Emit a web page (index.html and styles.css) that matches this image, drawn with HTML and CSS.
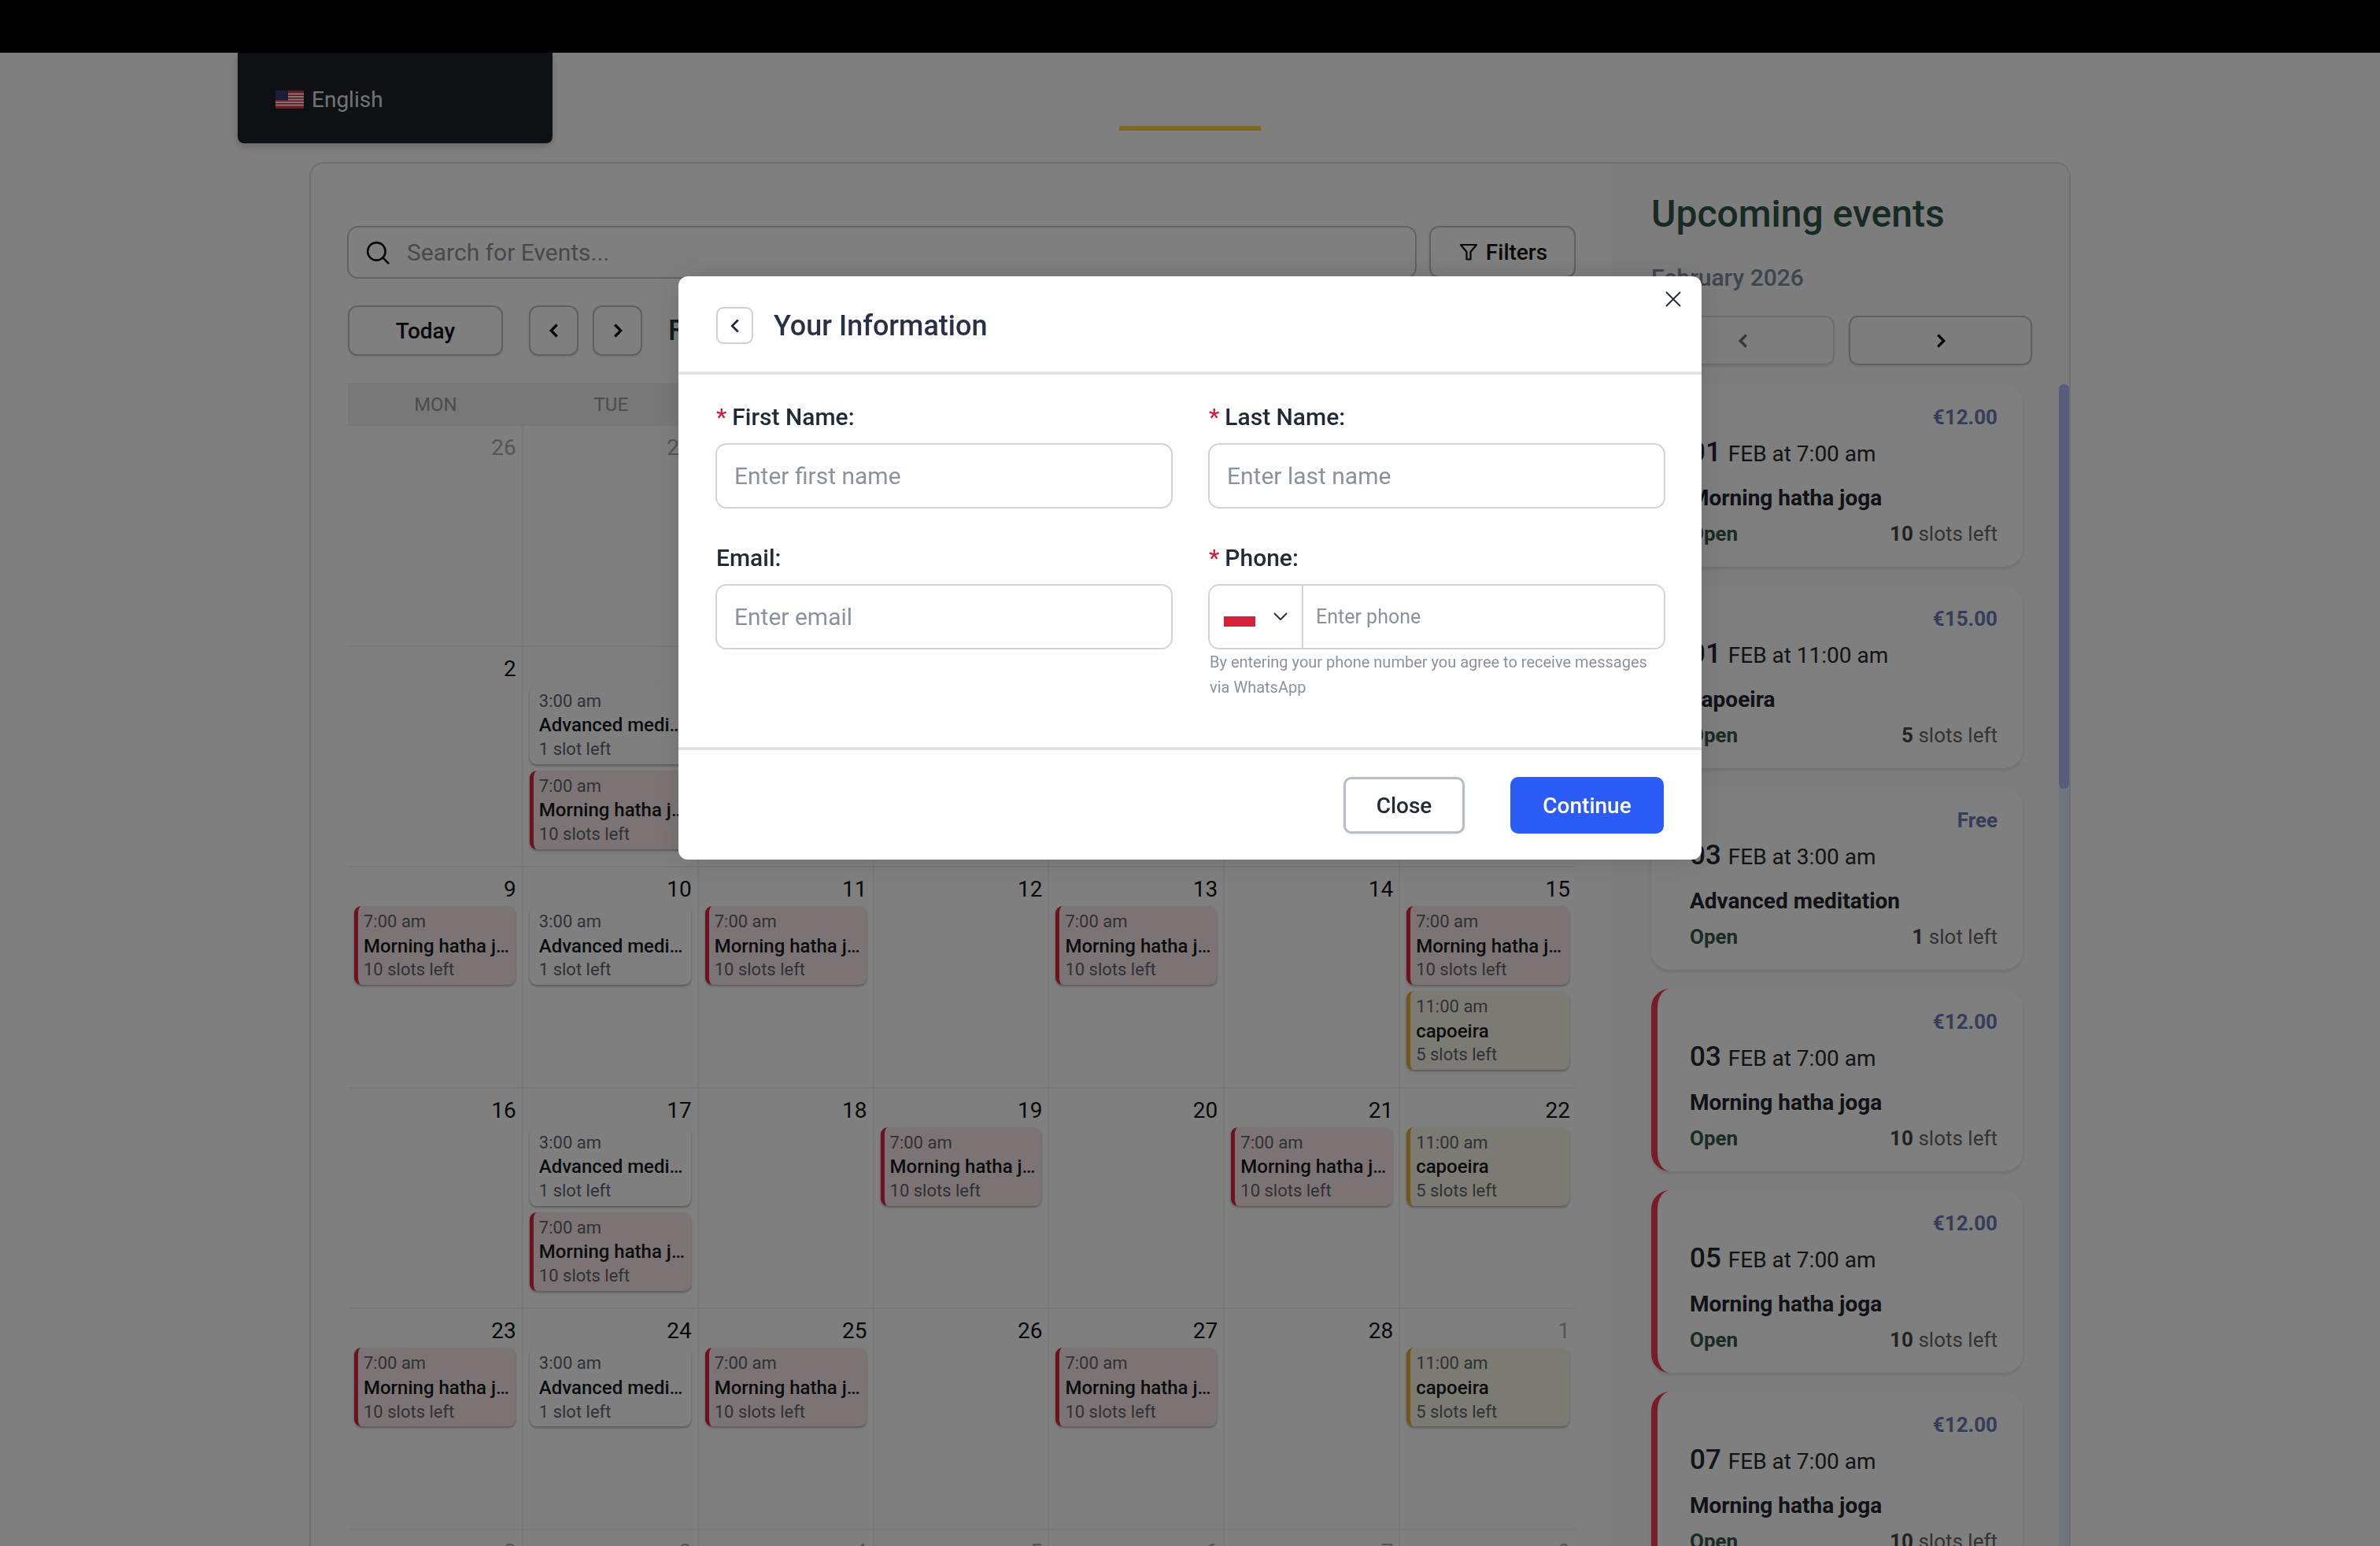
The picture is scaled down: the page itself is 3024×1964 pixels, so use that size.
FILE: index.html
```html
<!DOCTYPE html>
<html lang="en">
<head>
  <meta charset="UTF-8" />
  <title>Events Calendar</title>
  <link rel="stylesheet" href="styles.css">
</head>
<body>
  <header class="topbar"></header>

  <div class="lang-menu">
    <svg class="us-flag" viewBox="0 0 36 23">
      <rect width="36" height="23" fill="#d8303f"/>
      <rect y="3.5" width="36" height="1.8" fill="#fff"/>
      <rect y="7" width="36" height="1.8" fill="#fff"/>
      <rect y="10.6" width="36" height="1.8" fill="#fff"/>
      <rect y="14.1" width="36" height="1.8" fill="#fff"/>
      <rect y="17.7" width="36" height="1.8" fill="#fff"/>
      <rect width="16" height="12.4" fill="#3c3b6e"/>
    </svg>
    <span>English</span>
  </div>

  <main class="page">
    <div class="accent-line"></div>

    <section class="board">
      <div class="calendar">
        <div class="search-row">
          <div class="search-box">
            <svg class="search-icon" viewBox="0 0 28 28" fill="none" stroke="#111" stroke-width="2.4" stroke-linecap="round">
              <circle cx="12.5" cy="12.5" r="10.5"/>
              <path d="M20.5 20.5l6 6"/>
            </svg>
            <input type="text" placeholder="Search for Events...">
          </div>
          <button class="btn filters-btn">
            <svg class="filter-icon" viewBox="0 0 24 24" fill="none" stroke="#111" stroke-width="2.2" stroke-linejoin="round">
              <path d="M2 3h20l-7.5 9v9.500h-5V12z"/>
            </svg>
            Filters
          </button>
        </div>

        <div class="toolbar">
          <button class="btn today-btn">Today</button>
          <button class="btn nav-btn">
            <svg viewBox="0 0 16 16" class="chev" fill="none" stroke="#111" stroke-width="2.2"><path d="M10.500 3l-5 5 5 5"/></svg>
          </button>
          <button class="btn nav-btn">
            <svg viewBox="0 0 16 16" class="chev" fill="none" stroke="#111" stroke-width="2.2"><path d="M5.500 3l5 5-5 5"/></svg>
          </button>
          <h2 class="month-title">February 2026</h2>
        </div>

        <div class="week-head">
          <div>MON</div><div>TUE</div><div>WED</div><div>THU</div><div>FRI</div><div>SAT</div><div>SUN</div>
        </div>

        <div class="month-grid">
          <div class="cell"><div class="day muted">26</div></div>
          <div class="cell"><div class="day muted">27</div></div>
          <div class="cell"><div class="day muted">28</div></div>
          <div class="cell"><div class="day muted">29</div></div>
          <div class="cell"><div class="day muted">30</div></div>
          <div class="cell"><div class="day muted">31</div></div>
          <div class="cell"><div class="day">1</div>
            <div class="event red"><p class="ev-time">7:00 am</p><p class="ev-name">Morning hatha joga</p><p class="ev-slots">10 slots left</p></div>
            <div class="event yellow"><p class="ev-time">11:00 am</p><p class="ev-name">capoeira</p><p class="ev-slots">5 slots left</p></div>
          </div>

          <div class="cell"><div class="day">2</div></div>
          <div class="cell"><div class="day">3</div>
            <div class="event"><p class="ev-time">3:00 am</p><p class="ev-name">Advanced meditation</p><p class="ev-slots">1 slot left</p></div>
            <div class="event red"><p class="ev-time">7:00 am</p><p class="ev-name">Morning hatha joga</p><p class="ev-slots">10 slots left</p></div>
          </div>
          <div class="cell"><div class="day">4</div></div>
          <div class="cell"><div class="day">5</div>
            <div class="event red"><p class="ev-time">7:00 am</p><p class="ev-name">Morning hatha joga</p><p class="ev-slots">10 slots left</p></div>
          </div>
          <div class="cell"><div class="day">6</div></div>
          <div class="cell"><div class="day">7</div>
            <div class="event red"><p class="ev-time">7:00 am</p><p class="ev-name">Morning hatha joga</p><p class="ev-slots">10 slots left</p></div>
          </div>
          <div class="cell"><div class="day">8</div></div>

          <div class="cell"><div class="day">9</div>
            <div class="event red"><p class="ev-time">7:00 am</p><p class="ev-name">Morning hatha joga</p><p class="ev-slots">10 slots left</p></div>
          </div>
          <div class="cell"><div class="day">10</div>
            <div class="event"><p class="ev-time">3:00 am</p><p class="ev-name">Advanced meditation</p><p class="ev-slots">1 slot left</p></div>
          </div>
          <div class="cell"><div class="day">11</div>
            <div class="event red"><p class="ev-time">7:00 am</p><p class="ev-name">Morning hatha joga</p><p class="ev-slots">10 slots left</p></div>
          </div>
          <div class="cell"><div class="day">12</div></div>
          <div class="cell"><div class="day">13</div>
            <div class="event red"><p class="ev-time">7:00 am</p><p class="ev-name">Morning hatha joga</p><p class="ev-slots">10 slots left</p></div>
          </div>
          <div class="cell"><div class="day">14</div></div>
          <div class="cell"><div class="day">15</div>
            <div class="event red"><p class="ev-time">7:00 am</p><p class="ev-name">Morning hatha joga</p><p class="ev-slots">10 slots left</p></div>
            <div class="event yellow"><p class="ev-time">11:00 am</p><p class="ev-name">capoeira</p><p class="ev-slots">5 slots left</p></div>
          </div>

          <div class="cell"><div class="day">16</div></div>
          <div class="cell"><div class="day">17</div>
            <div class="event"><p class="ev-time">3:00 am</p><p class="ev-name">Advanced meditation</p><p class="ev-slots">1 slot left</p></div>
            <div class="event red"><p class="ev-time">7:00 am</p><p class="ev-name">Morning hatha joga</p><p class="ev-slots">10 slots left</p></div>
          </div>
          <div class="cell"><div class="day">18</div></div>
          <div class="cell"><div class="day">19</div>
            <div class="event red"><p class="ev-time">7:00 am</p><p class="ev-name">Morning hatha joga</p><p class="ev-slots">10 slots left</p></div>
          </div>
          <div class="cell"><div class="day">20</div></div>
          <div class="cell"><div class="day">21</div>
            <div class="event red"><p class="ev-time">7:00 am</p><p class="ev-name">Morning hatha joga</p><p class="ev-slots">10 slots left</p></div>
          </div>
          <div class="cell"><div class="day">22</div>
            <div class="event yellow"><p class="ev-time">11:00 am</p><p class="ev-name">capoeira</p><p class="ev-slots">5 slots left</p></div>
          </div>

          <div class="cell"><div class="day">23</div>
            <div class="event red"><p class="ev-time">7:00 am</p><p class="ev-name">Morning hatha joga</p><p class="ev-slots">10 slots left</p></div>
          </div>
          <div class="cell"><div class="day">24</div>
            <div class="event"><p class="ev-time">3:00 am</p><p class="ev-name">Advanced meditation</p><p class="ev-slots">1 slot left</p></div>
          </div>
          <div class="cell"><div class="day">25</div>
            <div class="event red"><p class="ev-time">7:00 am</p><p class="ev-name">Morning hatha joga</p><p class="ev-slots">10 slots left</p></div>
          </div>
          <div class="cell"><div class="day">26</div></div>
          <div class="cell"><div class="day">27</div>
            <div class="event red"><p class="ev-time">7:00 am</p><p class="ev-name">Morning hatha joga</p><p class="ev-slots">10 slots left</p></div>
          </div>
          <div class="cell"><div class="day">28</div></div>
          <div class="cell"><div class="day muted">1</div>
            <div class="event yellow"><p class="ev-time">11:00 am</p><p class="ev-name">capoeira</p><p class="ev-slots">5 slots left</p></div>
          </div>

          <div class="cell"><div class="day muted">2</div></div>
          <div class="cell"><div class="day muted">3</div></div>
          <div class="cell"><div class="day muted">4</div></div>
          <div class="cell"><div class="day muted">5</div></div>
          <div class="cell"><div class="day muted">6</div></div>
          <div class="cell"><div class="day muted">7</div></div>
          <div class="cell"><div class="day muted">8</div></div>
        </div>
      </div>

      <aside class="upcoming">
        <h2>Upcoming events</h2>
        <div class="up-month">February 2026</div>
        <div class="up-nav">
          <button class="btn up-btn faded">
            <svg viewBox="0 0 16 16" class="chev" fill="none" stroke="#111" stroke-width="2.2"><path d="M10.500 3l-5 5 5 5"/></svg>
          </button>
          <button class="btn up-btn">
            <svg viewBox="0 0 16 16" class="chev" fill="none" stroke="#111" stroke-width="2.2"><path d="M5.500 3l5 5-5 5"/></svg>
          </button>
        </div>

        <div class="up-body">
          <div class="up-list">
            <article class="up-card">
              <div class="up-price">€12.00</div>
              <div class="up-date"><b>01</b> FEB at 7:00 am</div>
              <div class="up-name">Morning hatha joga</div>
              <div class="up-foot"><span class="up-open">Open</span><span><b>10</b> slots left</span></div>
            </article>
            <article class="up-card">
              <div class="up-price">€15.00</div>
              <div class="up-date"><b>01</b> FEB at 11:00 am</div>
              <div class="up-name">capoeira</div>
              <div class="up-foot"><span class="up-open">Open</span><span><b>5</b> slots left</span></div>
            </article>
            <article class="up-card">
              <div class="up-price">Free</div>
              <div class="up-date"><b>03</b> FEB at 3:00 am</div>
              <div class="up-name">Advanced meditation</div>
              <div class="up-foot"><span class="up-open">Open</span><span><b>1</b> slot left</span></div>
            </article>
            <article class="up-card red">
              <div class="up-price">€12.00</div>
              <div class="up-date"><b>03</b> FEB at 7:00 am</div>
              <div class="up-name">Morning hatha joga</div>
              <div class="up-foot"><span class="up-open">Open</span><span><b>10</b> slots left</span></div>
            </article>
            <article class="up-card red">
              <div class="up-price">€12.00</div>
              <div class="up-date"><b>05</b> FEB at 7:00 am</div>
              <div class="up-name">Morning hatha joga</div>
              <div class="up-foot"><span class="up-open">Open</span><span><b>10</b> slots left</span></div>
            </article>
            <article class="up-card red">
              <div class="up-price">€12.00</div>
              <div class="up-date"><b>07</b> FEB at 7:00 am</div>
              <div class="up-name">Morning hatha joga</div>
              <div class="up-foot"><span class="up-open">Open</span><span><b>10</b> slots left</span></div>
            </article>
          </div>
          <div class="scroll-track"><div class="scroll-thumb"></div></div>
        </div>
      </aside>
    </section>
  </main>

  <div class="overlay">
    <div class="modal">
      <div class="modal-head">
        <button class="back-btn">
          <svg viewBox="0 0 16 16" class="chev" fill="none" stroke="#1f2937" stroke-width="1.800"><path d="M10.500 3l-5 5 5 5"/></svg>
        </button>
        <h3>Your Information</h3>
        <svg class="close-x" viewBox="0 0 20 20" fill="none" stroke="#1f2937" stroke-width="1.800">
          <path d="M1 1l18 18M19 1L1 19"/>
        </svg>
      </div>

      <div class="modal-body">
        <div class="field">
          <label><span class="req">*</span>First Name:</label>
          <input type="text" placeholder="Enter first name">
        </div>
        <div class="field">
          <label><span class="req">*</span>Last Name:</label>
          <input type="text" placeholder="Enter last name">
        </div>
        <div class="field">
          <label>Email:</label>
          <input type="text" placeholder="Enter email">
        </div>
        <div class="field">
          <label><span class="req">*</span>Phone:</label>
          <div class="phone-box">
            <div class="country">
              <span class="pl-flag"></span>
              <svg class="country-chev" viewBox="0 0 18 10" fill="none" stroke="#1f2937" stroke-width="1.800"><path d="M1 1l8 8 8-8"/></svg>
            </div>
            <input type="tel" placeholder="Enter phone">
          </div>
          <p class="hint">By entering your phone number you agree to receive messages via WhatsApp</p>
        </div>
      </div>

      <div class="modal-foot">
        <button class="close-btn">Close</button>
        <button class="continue-btn">Continue</button>
      </div>
    </div>
  </div>
</body>
</html>
```

FILE: styles.css
```css
* {
  box-sizing: border-box;
}

html, body {
  height: 100%;
}

body {
  margin: 0;
  overflow: hidden;
  background: #fff;
  color: #111;
  font-family: Roboto, "Liberation Sans", sans-serif;
}

p, h2, h3 {
  margin: 0;
}

button {
  font-family: inherit;
  cursor: pointer;
}

.topbar {
  height: 67px;
  background: #000;
}

.lang-menu {
  position: absolute;
  top: 67px;
  left: 302px;
  width: 400px;
  height: 115px;
  padding: 3px 48px 0;
  display: flex;
  align-items: center;
  gap: 10px;
  background: #1c2329;
  border-radius: 0 0 8px 8px;
  box-shadow: 0 4px 10px rgba(0, 0, 0, 0.2);
  color: #e2e5e8;
  font-size: 28px;
}

.us-flag {
  width: 36px;
  height: 23px;
}

.page {
  width: 2238px;
  margin: 0 auto;
}

.accent-line {
  width: 180px;
  height: 6px;
  margin: 93px auto 40px;
  background: #ffcc44;
}

.board {
  display: grid;
  grid-template-columns: 1653px 1fr;
  height: 1900px;
  border: 2px solid #dfdfdf;
  border-radius: 18px;
}

/* calendar side */
.calendar {
  padding: 79px 46px 0 47px;
}

.search-row {
  display: flex;
  gap: 16px;
}

.search-box {
  flex: 1;
  height: 67px;
  display: flex;
  align-items: center;
  gap: 20px;
  padding: 0 20px 0 22px;
  margin-left: -1px;
  border: 2px solid #c4c6c8;
  border-radius: 14px;
}

.search-icon {
  width: 30px;
  height: 30px;
  flex: none;
}

.search-box input {
  flex: 1;
  border: none;
  outline: none;
  background: transparent;
  font: 30px Roboto, sans-serif;
}

.search-box input::placeholder {
  color: #8f9296;
}

.btn {
  display: flex;
  align-items: center;
  justify-content: center;
  background: transparent;
  border: 2px solid #bfc1c3;
  border-radius: 12px;
  color: #111;
  font-size: 28px;
  font-weight: 500;
  box-shadow: 0 2px 3px rgba(0, 0, 0, 0.08);
}

.filters-btn {
  width: 186px;
  height: 66px;
  padding-left: 8px;
  gap: 10px;
}

.filter-icon {
  width: 24px;
  height: 24px;
}

.toolbar {
  display: flex;
  align-items: center;
  margin-top: 34px;
}

.today-btn {
  width: 197px;
  height: 64px;
  margin-right: 33px;
}

.nav-btn {
  width: 63px;
  height: 64px;
  margin-right: 18px;
}

.chev {
  width: 24px;
  height: 24px;
}

.month-title {
  margin-left: 15px;
  font-size: 36px;
  font-weight: 500;
  color: #1c4033;
}

.week-head {
  display: grid;
  grid-template-columns: repeat(7, 1fr);
  height: 54px;
  margin-top: 35px;
  align-items: center;
  background: #f1f1f1;
  text-align: center;
  color: #999;
  font-size: 24px;
}

.month-grid {
  display: grid;
  grid-template-columns: repeat(7, 1fr);
  grid-auto-rows: 280.6px;
}

.cell {
  min-width: 0;
  padding: 8px 8px 0;
  border-right: 2px solid #f0f0f0;
  border-bottom: 2px solid #f0f0f0;
}

.cell:nth-child(7n) {
  border-right: none;
}

.day {
  height: 41px;
  margin-right: -1px;
  text-align: right;
  font-size: 28px;
  line-height: 40px;
  color: #111;
}

.day.muted {
  color: #aaa;
}

.event {
  height: 100px;
  margin-bottom: 8px;
  padding: 5px 6px 0 7px;
  border-left: 5px solid #fff;
  border-radius: 9px;
  background: #fff;
  box-shadow: 0 2px 3px rgba(0, 0, 0, 0.3);
  line-height: 30.6px;
}

.event.red {
  background: #f9e9e9;
  border-left-color: #dd2240;
}

.event.yellow {
  background: #f9f7e6;
  border-left-color: #e0b030;
}

.ev-time, .ev-slots {
  font-size: 22px;
  color: #5d646c;
}

.ev-name {
  font-size: 24px;
  font-weight: 500;
  color: #16191d;
  white-space: nowrap;
  overflow: hidden;
  text-overflow: ellipsis;
}

/* upcoming side */
.upcoming {
  padding: 36px 0 0 50px;
  background: #fbfbfb;
  border-radius: 0 16px 16px 0;
  min-width: 0;
}

.upcoming h2 {
  font-size: 48px;
  line-height: 56px;
  font-weight: 500;
  color: #2f5548;
}

.up-month {
  margin-top: 33px;
  font-size: 30px;
  line-height: 40px;
  font-weight: 500;
  color: #7c8a99;
}

.up-nav {
  display: flex;
  gap: 18px;
  width: 484px;
  margin-top: 28px;
}

.up-btn {
  flex: 1;
  height: 63px;
}

.up-btn.faded {
  border-color: #dcdcdc;
}

.up-btn.faded .chev {
  opacity: 0.6;
}

.up-body {
  display: flex;
  justify-content: space-between;
  margin-top: 24px;
}

.up-list {
  width: 472px;
  display: flex;
  flex-direction: column;
  gap: 24px;
}

.up-card {
  height: 232px;
  padding: 27px 32px 0 41px;
  border-left: 8px solid #fff;
  border-radius: 24px;
  background: #fff;
  box-shadow: 0 3px 5px rgba(0, 0, 0, 0.12);
}

.up-card.red {
  border-left-color: #f03a50;
}

.up-price {
  text-align: right;
  font-size: 26px;
  line-height: 30px;
  font-weight: 700;
  color: #6a7ab0;
}

.up-date {
  margin-top: 6px;
  font-size: 28px;
  line-height: 48px;
  color: #24292e;
}

.up-date b {
  font-size: 35px;
  font-weight: 500;
  margin-right: 2px;
}

.up-name {
  margin-top: 14px;
  font-size: 28px;
  line-height: 36px;
  font-weight: 700;
  color: #20252b;
}

.up-foot {
  display: flex;
  justify-content: space-between;
  margin-top: 10px;
  font-size: 26px;
  line-height: 34px;
  color: #666;
}

.up-foot b {
  color: #444;
}

.up-open {
  font-weight: 700;
  color: #34584b;
}

.scroll-track {
  width: 13px;
  height: 1500px;
  background: #e4e8f8;
  border-radius: 6px 6px 0 0;
}

.scroll-thumb {
  height: 514px;
  background: #b2baf6;
  border-radius: 6px;
}

/* modal */
.overlay {
  position: fixed;
  inset: 0;
  display: flex;
  justify-content: center;
  padding-top: 351px;
  background: rgba(0, 0, 0, 0.5);
}

.modal {
  position: relative;
  width: 1300px;
  height: 741px;
  background: #fff;
  border-radius: 12px;
  box-shadow: 0 0 40px rgba(0, 0, 0, 0.12);
}

.modal-head {
  height: 125px;
  display: flex;
  align-items: center;
  gap: 26px;
  padding: 4px 48px 0;
  border-bottom: 4px solid #e2e3e6;
}

.back-btn {
  width: 47px;
  height: 47px;
  padding: 0;
  display: flex;
  align-items: center;
  justify-content: center;
  background: #fff;
  border: 2px solid #cdd1d7;
  border-radius: 9px;
}

.modal-head h3 {
  font-size: 36px;
  font-weight: 500;
  color: #283146;
}

.close-x {
  position: absolute;
  top: 19px;
  right: 26px;
  width: 20px;
  height: 20px;
}

.modal-body {
  display: grid;
  grid-template-columns: 581px 581px;
  column-gap: 45px;
  row-gap: 45px;
  padding: 36px 46px 60px 47px;
  border-bottom: 4px solid #e2e3e6;
}

.field label {
  display: block;
  margin: 0 0 15px 1px;
  font-size: 30px;
  line-height: 36px;
  font-weight: 500;
  color: #212b36;
}

.req {
  color: #d11a3c;
  margin-right: 7px;
}

.field input {
  width: 100%;
  height: 83px;
  padding: 0 22px;
  border: 2px solid #d1d5db;
  border-radius: 14px;
  outline: none;
  font: 30px Roboto, sans-serif;
  color: #212b36;
}

.field input::placeholder {
  color: #8a929c;
}

.phone-box {
  display: flex;
  height: 83px;
  border: 2px solid #d1d5db;
  border-radius: 14px;
  overflow: hidden;
}

.country {
  width: 119px;
  flex: none;
  display: flex;
  align-items: center;
  padding: 0 0 2px 18px;
  border-right: 2px solid #d1d5db;
}

.pl-flag {
  width: 40px;
  height: 26px;
  background: linear-gradient(#fff 50%, #d6203a 50%);
}

.country-chev {
  width: 18px;
  height: 10px;
  margin-left: 23px;
}

.phone-box input {
  height: 100%;
  padding: 0 16px;
  border: none;
  border-radius: 0;
  font-size: 25px;
}

.hint {
  margin: 0 0 0 2px;
  font-size: 20px;
  line-height: 32px;
  color: #8a929c;
}

.modal-foot {
  height: 138px;
  display: flex;
  justify-content: flex-end;
  align-items: center;
  gap: 58px;
  padding: 2px 48px 0;
}

.close-btn, .continue-btn {
  height: 72px;
  font-size: 28px;
  font-weight: 500;
  border-radius: 10px;
}

.close-btn {
  width: 154px;
  background: #fff;
  border: 3px solid #b9bec5;
  color: #212b36;
  box-shadow: 0 1px 3px rgba(0, 0, 0, 0.1);
}

.continue-btn {
  width: 195px;
  background: #2b5cf5;
  border: none;
  color: #fff;
}
```
